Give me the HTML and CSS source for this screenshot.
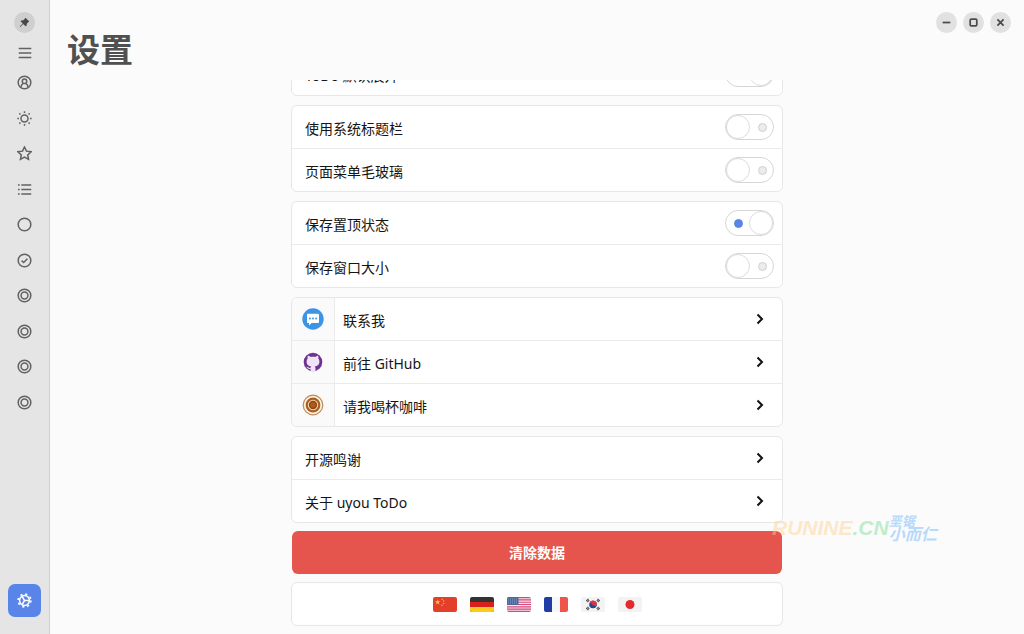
FILE: index.html
```html
<!DOCTYPE html>
<html lang="zh-CN">
<head>
<meta charset="utf-8">
<meta name="viewport" content="width=device-width, initial-scale=1">
<title>设置</title>
<link rel="stylesheet" href="styles.css">
</head>
<body>
<svg class="defs" aria-hidden="true">
  <symbol id="ring" viewBox="0 0 14 14"><circle cx="7" cy="7" r="5.9"/><circle cx="7" cy="7" r="3.2"/></symbol>
  <symbol id="chevron" viewBox="0 0 10 12"><path d="M2.500 1.500 7 6l-4.500 4.500"/></symbol>
</svg>
<div class="app">
  <aside class="sidebar">
    <button class="round" aria-label="置顶"><svg class="pin" viewBox="0 0 12 12"><path d="M7.100.8 11.200 4.900 10 5.700 8.500 7.300 8.300 9.600 7.200 10.200 4.600 7.600 1.300 10.900.8 10.400 4.100 7.100 1.700 4.700 2.400 3.700 4.800 3.500 6.300 2Z"/></svg></button>
    <button class="menu" aria-label="菜单"><svg class="line" viewBox="0 0 14 14"><path d="M.7 2.500h12.600M.7 7h12.600M.7 11.500h12.600"/></svg></button>
    <nav class="nav">
      <a href="#" aria-label="账户"><svg class="line" viewBox="0 0 14 14"><circle cx="7" cy="7" r="5.900"/><circle cx="7" cy="5.900" r="2.100"/><path d="M3.900 11.400V10.500Q4 8.700 5.700 8.200M10.100 11.400V10.500Q10 8.700 8.300 8.200"/></svg></a>
      <a href="#" aria-label="今天"><svg class="line" viewBox="0 0 14 14"><circle cx="7" cy="7" r="3.300"/><path d="M7 .3v1.500M7 12.200v1.500M.3 7h1.500M12.200 7h1.500M2.200 2.200l1 1M10.800 10.800l1 1M2.200 11.800l1-1M10.800 3.200l1-1"/></svg></a>
      <a href="#" aria-label="星标"><svg class="line" viewBox="0 0 14 14"><path d="m7 .9 1.850 3.900 4.300.55-3.150 2.950.8 4.250L7 10.450l-3.800 2.100.8-4.250L.85 5.350l4.300-.55Z"/></svg></a>
      <a href="#" aria-label="全部"><svg class="line" viewBox="0 0 14 14"><path d="M4 2.900h9.300M4 7h9.300M4 11.100h9.300M.9 2.900h1.600M.9 7h1.600M.9 11.100h1.600"/></svg></a>
      <a href="#" aria-label="未完成"><svg class="line" viewBox="0 0 14 14"><circle cx="7" cy="7" r="5.900"/></svg></a>
      <a href="#" aria-label="已完成"><svg class="line" viewBox="0 0 14 14"><circle cx="7" cy="7" r="5.900"/><path d="m4.300 7.100 1.900 1.800 3.500-3.600"/></svg></a>
      <a href="#" aria-label="分类一"><svg class="line"><use href="#ring"/></svg></a>
      <a href="#" aria-label="分类二"><svg class="line"><use href="#ring"/></svg></a>
      <a href="#" aria-label="分类三"><svg class="line"><use href="#ring"/></svg></a>
      <a href="#" aria-label="分类四"><svg class="line"><use href="#ring"/></svg></a>
    </nav>
    <button class="settings" aria-label="设置"><svg class="line" viewBox="0 0 14 14"><circle cx="7" cy="7" r="4.600"/><path d="M7 7h4.500M7 7 4.800 3.200M7 7l-2.200 3.800"/><circle class="teeth" cx="7" cy="7" r="6"/></svg></button>
  </aside>

  <main class="main">
    <header class="header">
      <h1>设置</h1>
      <div class="window-buttons">
        <button class="round" aria-label="最小化"><svg viewBox="0 0 10 10"><path d="M1.500 5h7"/></svg></button>
        <button class="round" aria-label="最大化"><svg viewBox="0 0 10 10"><rect x="2" y="2" width="6" height="6" rx="1"/></svg></button>
        <button class="round" aria-label="关闭"><svg viewBox="0 0 10 10"><path d="m2.200 2.200 5.600 5.600M7.800 2.200 2.200 7.800"/></svg></button>
      </div>
    </header>

    <div class="scroller">
      <section class="card">
        <label class="row"><span>ToDo 默认展开</span><input class="switch" type="checkbox" checked></label>
      </section>
      <section class="card">
        <label class="row"><span>使用系统标题栏</span><input class="switch" type="checkbox"></label>
        <label class="row"><span>页面菜单毛玻璃</span><input class="switch" type="checkbox"></label>
      </section>
      <section class="card">
        <label class="row"><span>保存置顶状态</span><input class="switch" type="checkbox" checked></label>
        <label class="row"><span>保存窗口大小</span><input class="switch" type="checkbox"></label>
      </section>
      <section class="card">
        <a class="row with-icon" href="#"><i class="badge"><svg viewBox="0 0 22 22"><circle cx="11" cy="11" r="10.700" fill="#3b94e6"/><path d="M6 5.800h10q1 0 1 1v7.200q0 1-1 1h-6.300l-2.700 2.500V15H6q-1 0-1-1V6.800q0-1 1-1Z" fill="#fff"/><g fill="#3b94e6"><circle cx="7.900" cy="10.400" r="1"/><circle cx="11" cy="10.400" r="1"/><circle cx="14.100" cy="10.400" r="1"/></g></svg></i><span>联系我</span><svg class="chevron"><use href="#chevron"/></svg></a>
        <a class="row with-icon" href="#"><i class="badge"><svg viewBox="0 0 22 22"><circle cx="11" cy="11" r="9.300" fill="#6e3391"/><path d="M8.500 20.300v-2.500c-2.600.5-3.100-1.300-4.100-1.900 1.600-.4 2 1.200 3.300 1.100.4 0 .8-.2 1-.4.1-.5.300-.8.6-1.100-2.900-.4-4.700-1.600-4.700-4.900 0-1.200.4-2.200 1.100-3-.3-.8-.2-2 .1-2.900 1.200 0 2.200.6 2.900 1.300 1.500-.4 3.100-.4 4.600 0 .7-.7 1.700-1.300 2.900-1.300.3.900.4 2.100.1 2.900.7.800 1.100 1.800 1.100 3 0 3.300-1.800 4.500-4.700 4.900.6.500.8 1.200.8 2v2.800q-2.500.7-5 0Z" fill="#efe4f4"/></svg></i><span>前往 GitHub</span><svg class="chevron"><use href="#chevron"/></svg></a>
        <a class="row with-icon" href="#"><i class="badge"><svg viewBox="0 0 22 22"><circle cx="11" cy="11" r="9.800" fill="#faf1e3" stroke="#c18a55" stroke-width="1.200"/><circle cx="11" cy="11" r="7.400" fill="#a65f25"/><circle cx="11" cy="11" r="4.700" fill="#8c4513" stroke="#f1d2a6" stroke-width="1.100"/><circle cx="11" cy="11" r="2.800" fill="#ad5b1d"/></svg></i><span>请我喝杯咖啡</span><svg class="chevron"><use href="#chevron"/></svg></a>
      </section>
      <section class="card">
        <a class="row" href="#"><span>开源鸣谢</span><svg class="chevron"><use href="#chevron"/></svg></a>
        <a class="row" href="#"><span>关于 uyou ToDo</span><svg class="chevron"><use href="#chevron"/></svg></a>
      </section>
      <button class="clear">清除数据</button>
      <section class="card languages">
        <button aria-label="中文"><svg viewBox="0 0 24 15"><rect width="24" height="15" fill="#e3402b"/><path d="m4.700 2.400.7 1.900h2L5.800 5.500l.6 1.900-1.700-1.200L3 7.400l.6-1.900L2 4.300h2Z" fill="#fbc640"/><g fill="#f5a23c"><circle cx="9.200" cy="2.300" r=".8"/><circle cx="10.700" cy="4" r=".8"/><circle cx="10.600" cy="6.500" r=".8"/><circle cx="8.900" cy="8.200" r=".8"/></g></svg></button>
        <button aria-label="Deutsch"><svg viewBox="0 0 24 15"><rect width="24" height="15" fill="#333"/><path d="M0 5h24v5H0z" fill="#d9201a"/><path d="M0 10h24v5H0z" fill="#fccb1c"/></svg></button>
        <button aria-label="English"><svg viewBox="0 0 24 15"><rect width="24" height="15" fill="#f7e5ed"/><path d="M0 .6h24M0 2.900h24M0 5.200h24M0 7.500h24M0 9.800h24M0 12.100h24M0 14.400h24" stroke="#d5497c" stroke-width="1.150"/><path d="M0 0h11.500v8H0z" fill="#476a9d"/><path d="M1 2h10M1 4h10M1 6h10" stroke="#9cb3d0" stroke-width=".7" stroke-dasharray="1 1"/></svg></button>
        <button aria-label="Français"><svg viewBox="0 0 24 15"><rect width="24" height="15" fill="#f7f7f7"/><path d="M0 0h8v15H0z" fill="#1f3da5"/><path d="M16 0h8v15h-8z" fill="#ef544a"/></svg></button>
        <button aria-label="한국어"><svg viewBox="0 0 24 15"><rect width="24" height="15" fill="#f3f3f3"/><circle cx="12" cy="7.500" r="3.800" fill="#1d4c92"/><path d="M8.800 5.400a3.800 3.800 0 0 1 7 2.500Q14 10 12 7.900 9.700 5.700 8.800 5.400Z" fill="#df3440"/><path d="m5.200 4 2.300-2.200M6.300 5.200l2-2M16.500 1.800 18.800 4M15.700 3.200l2 2M5.200 11l2.300 2.200M6.300 9.800l2 2M16.500 13.200l2.300-2.200M15.700 11.800l2-2" stroke="#4d4d4d" stroke-width="1.100"/></svg></button>
        <button aria-label="日本語"><svg viewBox="0 0 24 15"><rect width="24" height="15" fill="#f3f3f3"/><circle cx="12" cy="7.500" r="4.500" fill="#e32b2f"/></svg></button>
      </section>
    </div>
  </main>
  <div class="watermark" aria-hidden="true"><span class="amber">RUNINE</span><span class="green">.CN</span><span class="blue"><small>垩锯</small><span>小而仁</span></span></div>
</div>
</body>
</html>
```

FILE: styles.css
```css
*, ::before, ::after { box-sizing: border-box; }

body {
  margin: 0;
  background: #fbfbfb;
  color: #151515;
  font: 14px/20px "Noto Sans", "Noto Sans CJK SC", sans-serif;
}

button {
  display: grid;
  place-items: center;
  margin: 0;
  padding: 0;
  border: 0;
  background: none;
  font: inherit;
}

a { color: inherit; text-decoration: none; }
svg { display: block; }
.defs { display: none; }

.app { position: relative; display: flex; height: 100vh; overflow: hidden; }

.sidebar {
  display: flex;
  flex: none;
  flex-direction: column;
  align-items: center;
  width: 50px;
  padding: 12px 0 17px;
  border-right: 1px solid #cfcfcf;
  background: #e5e5e5;
}

.round { width: 21px; height: 21px; border-radius: 50%; background: #e1e1e1; }
.sidebar .round { background: #cfcfcf; }
.pin { width: 11px; height: 11px; fill: #484848; }

.menu { width: 33px; height: 32px; margin-top: 4px; }
.line { width: 14px; height: 14px; fill: none; stroke: #626262; stroke-width: 1.5; }

.nav { display: flex; flex-direction: column; height: 355px; margin-top: -4px; }
.nav a { display: grid; flex: 1; place-items: center; width: 33px; }
.nav .line { width: 15px; height: 15px; stroke-width: 1.4; }

.settings {
  width: 33px;
  height: 33px;
  margin-top: auto;
  border-radius: 7px;
  background: #5985e9;
}
.settings .line { width: 15px; height: 15px; stroke: #fff; stroke-width: 1.4; }
.settings .teeth { stroke-width: 1.5; stroke-dasharray: 2 2.71; }

.main { display: flex; flex: 1; flex-direction: column; min-width: 0; }

.header {
  display: flex;
  flex: none;
  justify-content: space-between;
  align-items: flex-start;
  height: 80px;
  padding: 12px 13px 0 17px;
}
h1 { margin: 16px 0 0; color: #505050; font-size: 33px; line-height: 44px; }

.window-buttons { display: flex; gap: 6px; }
.window-buttons svg { width: 11px; height: 11px; fill: none; stroke: #4c4c4c; stroke-width: 1.6; }

.scroller {
  display: flex;
  flex: 1;
  flex-direction: column;
  justify-content: flex-end;
  align-items: center;
  gap: 8px;
  min-height: 0;
  padding: 0 16px 8px;
  overflow: hidden;
}

.card, .clear { flex: none; width: 100%; max-width: 492px; border-radius: 6px; }
.card { border: 1px solid #e7e7e7; background: #fff; overflow: hidden; }
.card + .card { margin-top: 1px; }

.row {
  display: flex;
  justify-content: space-between;
  align-items: center;
  height: 42px;
  padding: 0 8px 0 13px;
}
.row + .row { height: 43px; border-top: 1px solid #ebebeb; }
.row span { padding-top: 3px; }

.with-icon { padding-left: 0; }
.with-icon span { flex: 1; padding-left: 8px; }
.badge {
  display: grid;
  place-items: center;
  align-self: stretch;
  width: 43px;
  border-right: 1px solid #ebebeb;
  background: #fafafa;
}
.badge svg { width: 22px; height: 22px; }

.chevron {
  width: 10px;
  height: 12px;
  margin-right: 9px;
  fill: none;
  stroke: #111;
  stroke-width: 2;
}

.switch {
  display: flex;
  justify-content: space-between;
  align-items: center;
  width: 49px;
  height: 26px;
  margin: 0;
  border: 1px solid #d6d6d6;
  border-radius: 13px;
  background: #fff;
  appearance: none;
}
.switch::before {
  width: 24px;
  height: 24px;
  border: 1px solid #dcdcdc;
  border-radius: 50%;
  content: "";
}
.switch::after {
  width: 9px;
  height: 9px;
  margin: 0 6px 0 8px;
  border: 1px solid #d0d0d0;
  border-radius: 50%;
  background: #ececec;
  content: "";
}
.switch:checked { flex-direction: row-reverse; }
.switch:checked::after { margin: 0 6px 0 8px; border-color: #5985e9; background: #5985e9; }

.clear { max-width: 490px; height: 43px; background: #e5544d; color: #fff; font-weight: 700; }

.languages { display: flex; justify-content: center; align-items: center; gap: 13px; height: 44px; }
.languages svg { width: 24px; height: 15px; border-radius: 2px; }

.watermark {
  position: absolute;
  top: 512px;
  left: 772px;
  display: flex;
  align-items: center;
  font-family: "Liberation Sans", "Noto Sans CJK SC", sans-serif;
  font-size: 21px;
  font-style: italic;
  font-weight: 700;
  line-height: 32px;
  opacity: 0.45;
  pointer-events: none;
}
.amber { color: #ffd08a; }
.green { color: #79dc92; }
.blue { display: grid; color: #65b2fa; font-size: 16px; line-height: 14px; }
.blue small { font-size: 13px; line-height: 13px; }
```
